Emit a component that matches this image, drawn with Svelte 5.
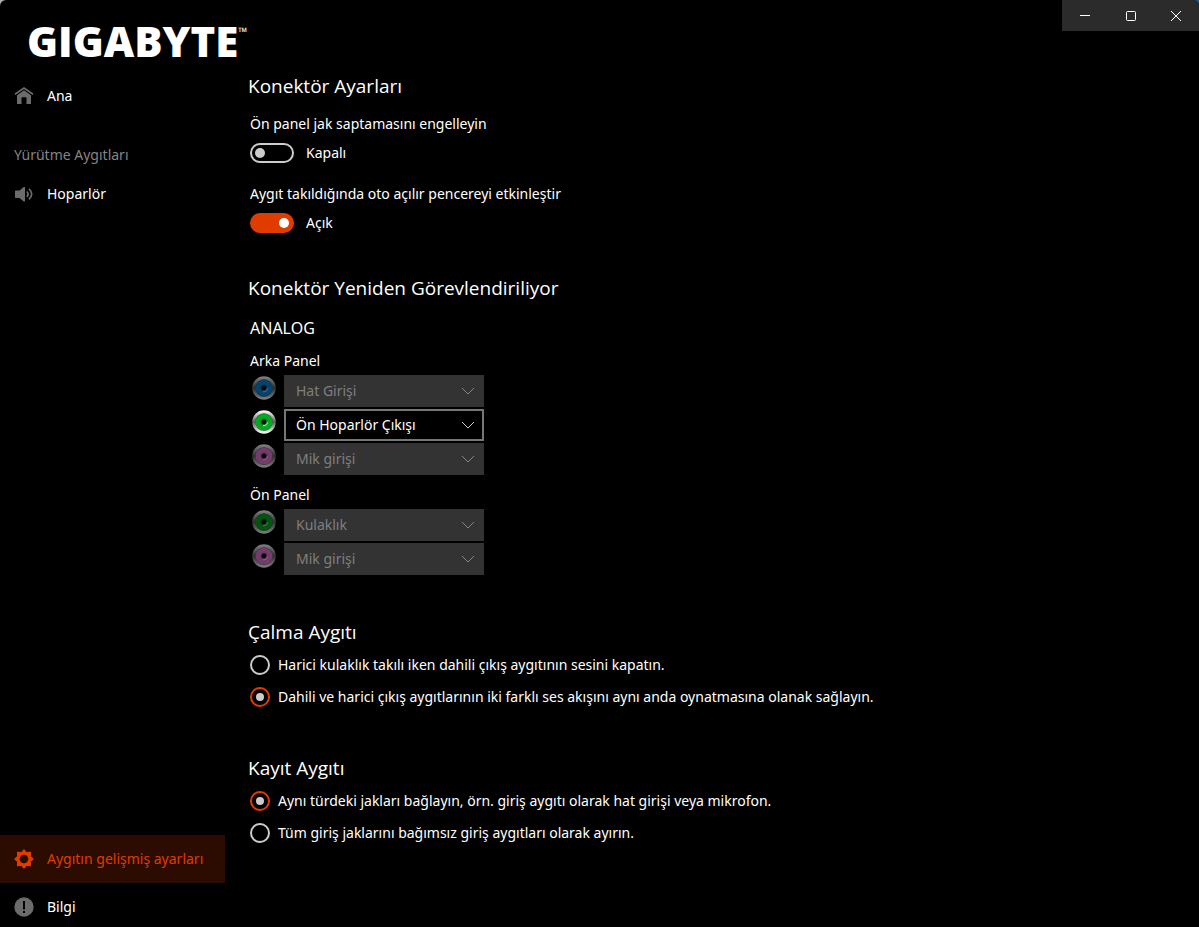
<script lang="ts">
  type Jack = { id: string; color: string; value: string; enabled: boolean };

  const panels: { name: string; jacks: Jack[] }[] = [
    {
      name: 'Arka Panel',
      jacks: [
        { id: 'rear-blue', color: 'blue', value: 'Hat Girişi', enabled: false },
        { id: 'rear-green', color: 'green', value: 'Ön Hoparlör Çıkışı', enabled: true },
        { id: 'rear-pink', color: 'pink', value: 'Mik girişi', enabled: false },
      ],
    },
    {
      name: 'Ön Panel',
      jacks: [
        { id: 'front-green', color: 'green', value: 'Kulaklık', enabled: false },
        { id: 'front-pink', color: 'pink', value: 'Mik girişi', enabled: false },
      ],
    },
  ];

  const playbackOptions = [
    'Harici kulaklık takılı iken dahili çıkış aygıtının sesini kapatın.',
    'Dahili ve harici çıkış aygıtlarının iki farklı ses akışını aynı anda oynatmasına olanak sağlayın.',
  ];
  const recordingOptions = [
    'Aynı türdeki jakları bağlayın, örn. giriş aygıtı olarak hat girişi veya mikrofon.',
    'Tüm giriş jaklarını bağımsız giriş aygıtları olarak ayırın.',
  ];

  let blockDetection = $state(false);
  let autoPopup = $state(true);
  let playback = $state(1);
  let recording = $state(0);
</script>

<div class="window">
  <aside class="sidebar">
    <div class="logo">GIGABYTE<sup>™</sup></div>

    <nav class="nav">
      <a class="item" href="#home">
        <svg class="icon" viewBox="0 0 20 20">
          <path d="M1 8.200 10 2l9 6.200" fill="none" stroke="currentColor" stroke-width="1.700" />
          <path d="M3 9.300 10 4.300l7 5V18h-4.500v-6a.8.8 0 0 0-.8-.8H8.300a.8.8 0 0 0-.8.800v6H3z" fill="currentColor" />
        </svg>
        Ana
      </a>
      <h3 class="group">Yürütme Aygıtları</h3>
      <a class="item" href="#speaker">
        <svg class="icon" viewBox="0 0 20 20">
          <path d="M1 7.200a.7.7 0 0 1 .7-.7H5.500l4.200-3.500h1.300v14.500H9.700L5.500 14H1.700a.7.7 0 0 1-.7-.7z" fill="currentColor" />
          <path d="M12.800 7.500q2.600 2.700 0 5.400M15 4.800q5.400 5.300 0 10.600" fill="none" stroke="currentColor" stroke-width="1.700" />
        </svg>
        Hoparlör
      </a>
    </nav>

    <nav class="nav bottom">
      <a class="item active" href="#advanced">
        <svg class="icon" viewBox="0 0 20 20">
          <path
            fill="currentColor"
            fill-rule="evenodd"
            d="M10 0l2.600 2.900 4.500-.2-.2 4.500L20 10l-3.100 2.800.2 4.500-4.500-.2L10 20l-2.600-2.900-4.500.2.200-4.500L0 10l3.100-2.800-.2-4.500 4.500.2zM10 5.700a4.300 4.300 0 1 0 0 8.600a4.300 4.300 0 1 0 0-8.600z"
          />
        </svg>
        Aygıtın gelişmiş ayarları
      </a>
      <a class="item" href="#info">
        <svg class="icon" viewBox="0 0 20 20">
          <circle cx="10" cy="10" r="9.700" fill="currentColor" />
          <path d="M9 4h2v8.500H9zM9 14h2v2H9z" fill="#000" />
        </svg>
        Bilgi
      </a>
    </nav>
  </aside>

  <main class="main">
    <header class="titlebar">
      <button aria-label="Simge durumuna küçült">
        <svg viewBox="0 0 12 12"><path d="M1 5.500h10" /></svg>
      </button>
      <button aria-label="Ekranı kapla">
        <svg viewBox="0 0 12 12"><rect x="1.500" y="1.500" width="9" height="9" rx="1" /></svg>
      </button>
      <button aria-label="Kapat">
        <svg viewBox="0 0 12 12"><path d="M1 1l10 10M11 1L1 11" /></svg>
      </button>
    </header>

    <div class="content">
      <section>
        <h2>Konektör Ayarları</h2>
        <div class="settings">
          <div class="setting">
            <label for="block-detection">Ön panel jak saptamasını engelleyin</label>
            <div class="switch-row">
              <input id="block-detection" class="switch" type="checkbox" role="switch" bind:checked={blockDetection} />
              <span>{blockDetection ? 'Açık' : 'Kapalı'}</span>
            </div>
          </div>
          <div class="setting">
            <label for="auto-popup">Aygıt takıldığında oto açılır pencereyi etkinleştir</label>
            <div class="switch-row">
              <input id="auto-popup" class="switch" type="checkbox" role="switch" bind:checked={autoPopup} />
              <span>{autoPopup ? 'Açık' : 'Kapalı'}</span>
            </div>
          </div>
        </div>
      </section>

      <section>
        <h2>Konektör Yeniden Görevlendiriliyor</h2>
        <h3 class="analog">ANALOG</h3>
        <div class="panels">
          {#each panels as panel}
            <div>
              <h4>{panel.name}</h4>
              {#each panel.jacks as jack}
                <div class="jack-row">
                  <svg class="jack {jack.color}" class:dim={!jack.enabled} viewBox="0 0 24 24">
                    <defs>
                      <linearGradient id="{jack.id}-rim" x1="0" y1="0" x2="0" y2="1">
                        <stop offset="0" stop-color="#f4f4f4" />
                        <stop offset="0.5" stop-color="#5c5c5c" />
                        <stop offset="1" stop-color="#f0f0f0" />
                      </linearGradient>
                    </defs>
                    <circle cx="12" cy="12" r="10.300" fill="#444" stroke="url(#{jack.id}-rim)" stroke-width="3" />
                    <circle class="ring" cx="12" cy="12" r="8.600" />
                    <circle cx="12" cy="12" r="3.600" fill="#000" fill-opacity="0.250" />
                    <path d="M15.500 12a3.500 3.500 0 0 1-4.500 3.400" fill="none" stroke="#fff" stroke-opacity="0.600" stroke-width="1.200" />
                    <circle cx="12" cy="12" r="2.400" fill="#111" />
                  </svg>
                  <div class="select">
                    <select aria-label="{panel.name} {jack.value}" disabled={!jack.enabled}>
                      <option>{jack.value}</option>
                    </select>
                    <svg class="chevron" viewBox="0 0 12 12"><path d="M0 3l6 6 6-6" /></svg>
                  </div>
                </div>
              {/each}
            </div>
          {/each}
        </div>
      </section>

      <section>
        <h2>Çalma Aygıtı</h2>
        <div class="radios">
          {#each playbackOptions as option, i}
            <label class="radio">
              <input type="radio" name="playback" value={i} bind:group={playback} />
              {option}
            </label>
          {/each}
        </div>
      </section>

      <section>
        <h2>Kayıt Aygıtı</h2>
        <div class="radios">
          {#each recordingOptions as option, i}
            <label class="radio">
              <input type="radio" name="recording" value={i} bind:group={recording} />
              {option}
            </label>
          {/each}
        </div>
      </section>
    </div>
  </main>
</div>

<style>
  :global(body) {
    background: linear-gradient(90deg, #a9b4ba, #24597c);
  }

  .window {
    display: grid;
    grid-template-columns: 225px 1fr;
    min-height: 100vh;
    background: #000;
    color: #fff;
    border-radius: 6px 6px 0 0;
    overflow: hidden;
    font-family: 'Noto Sans', sans-serif;
    font-size: 14px;
    line-height: 20px;
  }

  h2, h3, h4 {
    margin: 0;
    font-weight: 400;
  }

  .sidebar {
    display: flex;
    flex-direction: column;
  }

  .logo {
    height: 72px;
    padding-left: 27px;
    box-sizing: border-box;
    font-family: 'Open Sans', sans-serif;
    font-size: 42px;
    font-weight: 800;
    line-height: 82px;
    white-space: nowrap;
  }

  .logo sup {
    font-size: 12px;
    font-weight: 600;
    line-height: 12px;
    vertical-align: 21px;
  }

  .nav {
    display: flex;
    flex-direction: column;
  }

  .bottom { margin-top: auto; }

  .item {
    display: flex;
    align-items: center;
    gap: 13px;
    padding: 14px;
    color: #fff;
    text-decoration: none;
  }

  .bottom .item:last-child { padding-bottom: 10px; }

  .icon {
    width: 20px;
    height: 20px;
    color: #6b6b6b;
  }

  .active {
    background: #2c0b00;
    color: #e03c00;
  }

  .active .icon { color: #e03c00; }

  .group {
    padding: 25px 14px 5px;
    color: #858585;
    font-size: 14px;
  }

  .main { min-width: 0; }

  .titlebar {
    display: flex;
    width: 137px;
    margin-left: auto;
    background: #2b2b2b;
  }

  .titlebar button {
    display: flex;
    flex: 1;
    align-items: center;
    justify-content: center;
    height: 31px;
    padding: 0;
    border: 0;
    background: transparent;
  }

  .titlebar svg {
    width: 12px;
    height: 12px;
    fill: none;
    stroke: #fff;
  }

  .content {
    display: flex;
    flex-direction: column;
    gap: 41px;
    padding: 41px 24px 24px 23px;
  }

  h2 {
    font-family: 'Open Sans', sans-serif;
    font-size: 19px;
    line-height: 28px;
  }

  .settings {
    display: grid;
    gap: 21px;
    padding: 14px 0 0 2px;
  }

  .setting {
    display: grid;
    gap: 9px;
  }

  .switch-row {
    display: flex;
    align-items: center;
    gap: 12px;
  }

  .switch {
    display: flex;
    align-items: center;
    width: 44px;
    height: 20px;
    margin: 0;
    padding: 0 3px;
    box-sizing: border-box;
    border: 2px solid #ccc;
    border-radius: 10px;
    appearance: none;
  }

  .switch::before {
    content: '';
    width: 10px;
    height: 10px;
    border-radius: 50%;
    background: #ccc;
  }

  .switch:checked {
    justify-content: flex-end;
    border-color: #e03c00;
    background: #e03c00;
  }

  .switch:checked::before { background: #fff; }

  .analog {
    padding: 16px 0 13px 2px;
    font-size: 16px;
  }

  .panels {
    display: grid;
    gap: 8px;
    padding-left: 2px;
  }

  h4 {
    padding-bottom: 4px;
    font-size: 14px;
  }

  .jack-row {
    display: flex;
    gap: 8px;
    padding: 0 0 2px 2px;
  }

  .jack {
    width: 24px;
    height: 24px;
    padding-top: 1px;
  }

  .dim { opacity: 0.5; }
  .blue .ring { fill: #0a86d8; }
  .green .ring { fill: #06a821; }
  .pink .ring { fill: #e878d8; }

  .select {
    display: grid;
    align-items: center;
    width: 200px;
  }

  .select > * { grid-area: 1 / 1; }

  select {
    width: 100%;
    height: 32px;
    padding: 0 10px;
    border: 2px solid #767676;
    border-radius: 0;
    background: #000;
    color: #fff;
    font: inherit;
    appearance: none;
  }

  select:disabled {
    border-color: #333;
    background: #333;
    color: #7f7f7f;
    opacity: 1;
  }

  .chevron {
    justify-self: end;
    width: 12px;
    height: 12px;
    margin-right: 10px;
    fill: none;
    stroke: #ccc;
    pointer-events: none;
  }

  select:disabled + .chevron { stroke: #858585; }

  .radios { padding: 3px 0 0 2px; }

  .radio {
    display: flex;
    align-items: center;
    gap: 8px;
    min-height: 32px;
  }

  .radio input {
    display: grid;
    flex: none;
    place-items: center;
    width: 20px;
    height: 20px;
    margin: 0;
    border: 2px solid #ccc;
    border-radius: 50%;
    appearance: none;
  }

  .radio input:checked { border-color: #e03c00; }

  .radio input:checked::before {
    content: '';
    width: 8px;
    height: 8px;
    border-radius: 50%;
    background: #ccc;
  }
</style>
